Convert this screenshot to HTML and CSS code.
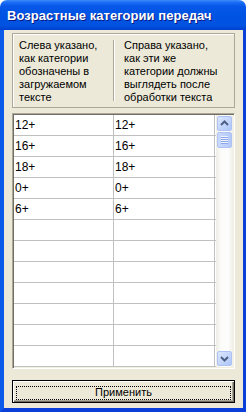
FILE: index.html
```html
<!DOCTYPE html>
<html>
<head>
<meta charset="utf-8">
<link rel="stylesheet" href="styles.css">
</head>
<body>
<div class="window">
  <div class="titlebar"><span class="title">Возрастные категории передач</span></div>
  <div class="frame">
    <div class="info">
      <div class="info-col left">Слева указано,<br>как категории<br>обозначены в<br>загружаемом<br>тексте</div>
      <div class="divider"></div>
      <div class="info-col right">Справа указано,<br>как эти же<br>категории должны<br>выглядеть после<br>обработки текста</div>
    </div>
    <div class="grid">
      <div class="table">
        <div class="row"><div class="cell c1">12+</div><div class="cell c2">12+</div></div>
        <div class="row"><div class="cell c1">16+</div><div class="cell c2">16+</div></div>
        <div class="row"><div class="cell c1">18+</div><div class="cell c2">18+</div></div>
        <div class="row"><div class="cell c1">0+</div><div class="cell c2">0+</div></div>
        <div class="row"><div class="cell c1">6+</div><div class="cell c2">6+</div></div>
        <div class="row"><div class="cell c1"></div><div class="cell c2"></div></div>
        <div class="row"><div class="cell c1"></div><div class="cell c2"></div></div>
        <div class="row"><div class="cell c1"></div><div class="cell c2"></div></div>
        <div class="row"><div class="cell c1"></div><div class="cell c2"></div></div>
        <div class="row"><div class="cell c1"></div><div class="cell c2"></div></div>
        <div class="row"><div class="cell c1"></div><div class="cell c2"></div></div>
        <div class="row"><div class="cell c1"></div><div class="cell c2"></div></div>
      </div>
      <div class="scrollbar">
        <div class="sb-btn"><svg width="13" height="13" viewBox="0 0 13 13"><polyline points="3,8 6.5,4.5 10,8" fill="none" stroke="#4d6185" stroke-width="2"/></svg></div>
        <div class="sb-thumb"><span></span><span></span><span></span><span></span></div>
        <div class="sb-track"></div>
        <div class="sb-btn"><svg width="13" height="13" viewBox="0 0 13 13"><polyline points="3,5 6.5,8.5 10,5" fill="none" stroke="#4d6185" stroke-width="2"/></svg></div>
      </div>
    </div>
    <div class="apply"><span class="apply-label">Применить</span></div>
  </div>
</div>
</body>
</html>
```
FILE: styles.css
```css
html, body {
  margin: 0;
  padding: 0;
  background: #ffffff;
}
.window {
  width: 246px;
  height: 412px;
  display: flex;
  flex-direction: column;
  font-family: "Liberation Sans", Arial, sans-serif;
}
.titlebar {
  height: 30px;
  box-sizing: border-box;
  border-radius: 7px 7px 0 0;
  background: linear-gradient(to bottom, #3c8cfb 0%, #1b6ef5 8%, #0758e8 20%, #0054e3 50%, #0052e0 85%, #0040cf 100%);
  padding: 0 0 0 7px;
  display: flex;
  align-items: center;
}
.title {
  color: #ffffff;
  font-weight: bold;
  font-size: 13px;
  letter-spacing: 0.05px;
  text-shadow: 1px 1px #0a1883;
  white-space: nowrap;
  margin-top: 1px;
}
.frame {
  flex: 1;
  display: flex;
  flex-direction: column;
  background: #ece9d8;
  border-left: 4px solid #0b5aea;
  border-right: 3px solid #0a3fd9;
  border-bottom: 4px solid #0a3fd9;
  padding: 3px 8px 5px 8px;
}
.info {
  height: 75px;
  box-sizing: border-box;
  border: 1px solid #aca899;
  box-shadow: inset 1px 1px #ffffff;
  display: flex;
  font-size: 11px;
  line-height: 13px;
  color: #000;
}
.info-col {
  padding-top: 5px;
  white-space: nowrap;
}
.info-col.left {
  width: 100px;
  box-sizing: border-box;
  padding-left: 6px;
}
.info-col.right {
  padding-left: 9px;
}
.divider {
  width: 1px;
  background: #aca899;
  border-right: 1px solid #ffffff;
  margin: 6px 0;
}
.grid {
  margin-top: 5px;
  height: 256px;
  box-sizing: border-box;
  border-style: solid;
  border-width: 1px;
  border-color: #aca899 #ffffff #ffffff #aca899;
  box-shadow: inset 1px 1px #716f64, inset -1px -1px #f1efe2;
  padding: 1px;
  background: #ffffff;
  display: flex;
}
.table {
  width: 202px;
  display: flex;
  flex-direction: column;
}
.row {
  display: flex;
  height: 21px;
  box-sizing: border-box;
  border-bottom: 1px solid #c0c0c0;
}
.cell {
  box-sizing: border-box;
  border-right: 1px solid #c0c0c0;
  font-size: 12px;
  line-height: 20px;
  padding-left: 1px;
  color: #000;
}
.c1 { width: 100px; }
.c2 { width: 101px; }
.scrollbar {
  width: 17px;
  display: flex;
  flex-direction: column;
  background: linear-gradient(to right, #eeede5, #fbfbf9 30%, #fdfdfd 70%, #f0efe8);
}
.sb-btn {
  height: 15px;
  margin: 1px;
  box-sizing: border-box;
  border: 1px solid #aec3f3;
  border-radius: 2px;
  background: linear-gradient(to bottom right, #dce7fe, #c1d3fb 60%, #aec5f9);
  display: flex;
  align-items: center;
  justify-content: center;
}
.sb-btn svg {
  display: block;
}
.sb-thumb {
  height: 16px;
  margin: 0 1px;
  box-sizing: border-box;
  border: 1px solid #aec3f3;
  border-radius: 2px;
  background: linear-gradient(to right, #cad9fc, #bdd0fb 60%, #b4c8f8);
  display: flex;
  flex-direction: column;
  align-items: center;
  justify-content: center;
  gap: 1px;
}
.sb-thumb span {
  width: 7px;
  height: 1px;
  background: #eef3fe;
  border-bottom: 1px solid #8ca7e8;
}
.sb-thumb span + span {
  margin-top: -1px;
}
.sb-track {
  flex: 1;
}
.apply {
  margin-top: 11px;
  height: 23px;
  box-sizing: border-box;
  border: 1px solid #000000;
  box-shadow: inset 1px 1px #ffffff, inset -1px -1px #716f64, inset -2px -2px #aca899;
  background: #ece9d8;
  position: relative;
  display: flex;
  align-items: center;
  justify-content: center;
  font-size: 11px;
  color: #000;
}
.apply::after {
  content: "";
  position: absolute;
  left: 3px;
  top: 5px;
  right: 3px;
  bottom: 2px;
  border: 1px dotted #000000;
}
.apply-label {
  margin-top: 1px;
}
```
